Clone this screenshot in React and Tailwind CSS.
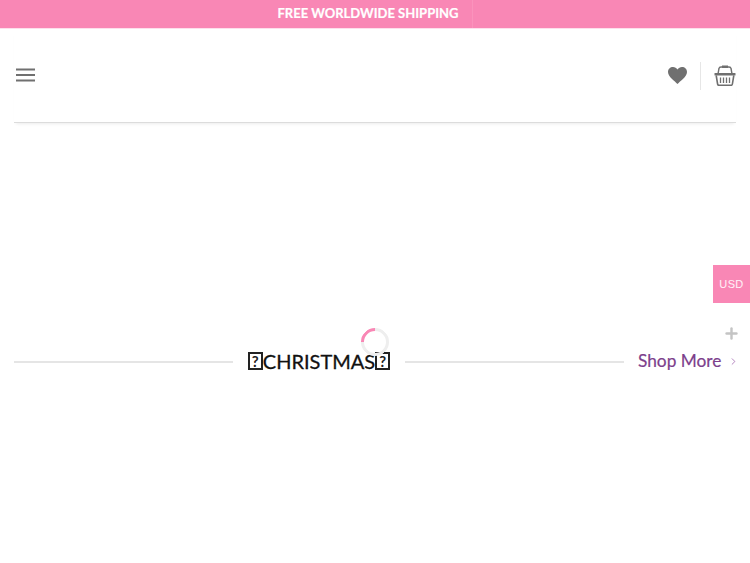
import { ChevronRight, Plus } from 'lucide-react'

function Tofu() {
  return (
    <span className="inline-flex shrink-0 items-center justify-center w-[15px] h-[18px] border-2 border-[#222] text-[15px] leading-none font-bold text-[#222] [-webkit-text-stroke:0px]">
      ?
    </span>
  )
}

function MenuIcon() {
  return (
    <svg width="19" height="14" viewBox="0 0 19 14" className="text-[#707070]">
      <path d="M0 1.5 H19 M0 7 H19 M0 12.5 H19" stroke="currentColor" strokeWidth="1.8" />
    </svg>
  )
}

function Basket() {
  return (
    <svg width="22" height="21" viewBox="0 0 22 21" fill="none" className="text-[#6f6f6f]">
      <path d="M4 9 L5 3.5 Q5.2 2 7 2 H15 Q16.8 2 17 3.5 L18 9" stroke="currentColor" strokeWidth="1.4" />
      <rect x="8" y="0.5" width="6" height="2.5" fill="currentColor" />
      <rect x="0.5" y="8" width="21" height="2.6" rx="0.6" fill="currentColor" />
      <path d="M2.2 10.5 L3.6 19 Q3.8 20.3 5 20.3 H17 Q18.2 20.3 18.4 19 L19.8 10.5" stroke="currentColor" strokeWidth="1.6" />
      <path d="M6.5 12.5 V18 M9.5 12.5 V18 M12.5 12.5 V18 M15.5 12.5 V18" stroke="currentColor" strokeWidth="1.3" />
    </svg>
  )
}

function Heart() {
  return (
    <svg width="19" height="17" viewBox="0 0 19 17" className="text-[#707070]">
      <path
        d="M9.5 17 C7 14.2 0 9.8 0 5 C0 2 2.2 0 5 0 C6.9 0 8.5 1 9.5 2.6 C10.5 1 12.1 0 14 0 C16.8 0 19 2 19 5 C19 9.8 12 14.2 9.5 17 Z"
        fill="currentColor"
      />
    </svg>
  )
}

export default function App() {
  return (
    <div className="relative w-[750px] h-[563px] overflow-hidden bg-white font-['Lato','Open_Sans',sans-serif]">
      {/* top bar */}
      <div className="relative h-[29px] bg-[#f987b5] flex items-center justify-center border-b border-[#fde0ec]">
        <span className="ml-[-14px] text-[13px] font-bold text-white [-webkit-text-stroke:0.2px_white]">FREE WORLDWIDE SHIPPING</span>
        <div className="absolute left-[472px] top-0 bottom-0 w-px bg-white/10" />
      </div>

      {/* header */}
      <header className="h-[94px] mx-[14px] flex items-center justify-between border-b border-[#dcdcdc] shadow-[0_3px_3px_-2px_rgba(0,0,0,0.08)] bg-white">
        <div className="ml-[2px] mb-[2px] flex"><MenuIcon /></div>
        <div className="flex items-center">
          <Heart />
          <div className="w-px h-[28px] bg-[#e6e6e6] ml-[13px] mr-[13px]" />
          <Basket />
        </div>
      </header>

      {/* section title */}
      <div className="mt-[224px] ml-[14px] flex items-center h-[30px]">
        <div className="w-[219px] shrink-0 h-[2px] bg-[#e5e5e5]" />
        <h2 className="w-[172px] shrink-0 pb-[2px] flex items-center justify-center text-[20px] font-normal text-[#111] leading-none [-webkit-text-stroke:0.3px_#111]">
          <Tofu />
          CHRISTMAS
          <Tofu />
        </h2>
        <div className="w-[219px] shrink-0 h-[2px] bg-[#e5e5e5]" />
        <a className="ml-[14px] pb-[2px] text-[17.3px] text-[#7d3f8c] font-normal whitespace-nowrap [-webkit-text-stroke:0.2px_#7d3f8c]">Shop More</a>
        <ChevronRight size={11} strokeWidth={1.6} className="ml-[7px] mb-[2px] text-[#9a5aa8]" />
      </div>

      {/* spinner */}
      <div className="absolute left-[361px] top-[328px] w-[28px] h-[28px] rounded-full rotate-45 border-[3px] border-[#eeeeee] border-l-[#f987b5]" />

      {/* currency tab */}
      <div className="absolute right-0 top-[265px] w-[37px] h-[38px] bg-[#f987b5] flex items-center justify-center text-[11px] text-white/90 font-['Liberation_Sans',sans-serif] tracking-[0.4px]">
        USD
      </div>
      <Plus size={17} strokeWidth={3.4} className="absolute left-[723px] top-[325px] text-[#c4c4c4]" />
    </div>
  )
}
